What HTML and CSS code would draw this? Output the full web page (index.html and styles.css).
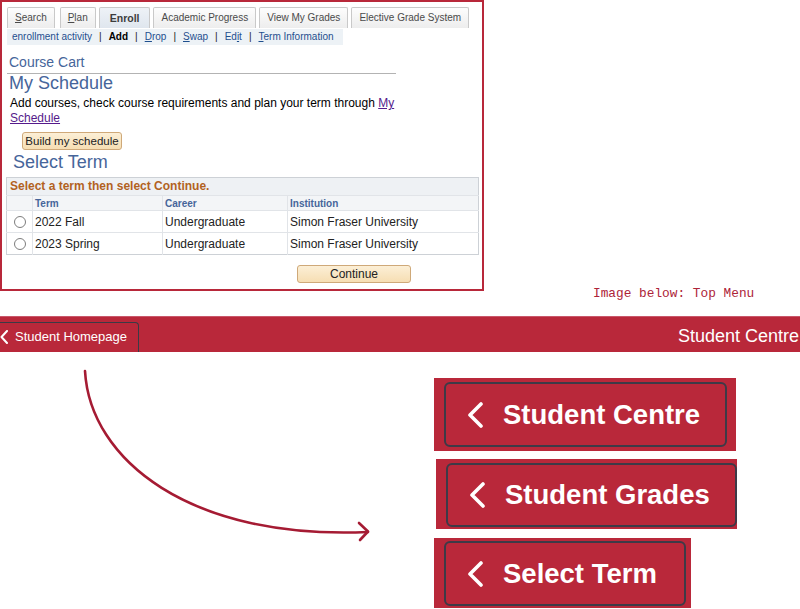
FILE: index.html
```html
<!DOCTYPE html>
<html lang="en">
<head>
<meta charset="utf-8">
<title>Enroll - Select Term</title>
<link rel="stylesheet" href="styles.css">
</head>
<body>
<div class="top">
  <div class="frame">
    <div class="tabs">
      <span class="tab tab-first"><u>S</u>earch</span>
      <span class="tab"><u>P</u>lan</span>
      <span class="tab tab-active">Enroll</span>
      <span class="tab">Academic Progress</span>
      <span class="tab">View My Grades</span>
      <span class="tab">Elective Grade System</span>
    </div>
    <div class="subnav">
      <span class="sublink">enrollment activity</span><span class="sep">|</span><b class="subcur">Add</b><span class="sep">|</span><span class="sublink"><u>D</u>rop</span><span class="sep">|</span><span class="sublink"><u>S</u>wap</span><span class="sep">|</span><span class="sublink">Ed<u>i</u>t</span><span class="sep">|</span><span class="sublink"><u>T</u>erm Information</span>
    </div>
    <div class="cart-title">Course Cart</div>
    <div class="rule"></div>
    <h2 class="h-blue h-sched">My Schedule</h2>
    <p class="intro">Add courses, check course requirements and plan your term through <a class="link">My Schedule</a></p>
    <button class="btn-ps btn-build">Build my schedule</button>
    <h2 class="h-blue h-term">Select Term</h2>
    <table class="terms">
      <tr class="t-title"><td colspan="4">Select a term then select Continue.</td></tr>
      <tr class="t-head"><th class="c1"></th><th class="c2">Term</th><th class="c3">Career</th><th class="c4">Institution</th></tr>
      <tr class="t-row"><td class="c1"><span class="radio"></span></td><td>2022 Fall</td><td>Undergraduate</td><td>Simon Fraser University</td></tr>
      <tr class="t-row"><td class="c1"><span class="radio"></span></td><td>2023 Spring</td><td>Undergraduate</td><td>Simon Fraser University</td></tr>
    </table>
    <button class="btn-ps btn-continue">Continue</button>
  </div>
  <div class="note">Image below: Top Menu</div>
</div>

<div class="menubar">
  <div class="home-btn">
    <svg class="home-chev" width="9" height="14" viewBox="0 0 9 14"><polyline points="7,1 1.5,7 7,13" fill="none" stroke="#fff" stroke-width="2" stroke-linecap="round" stroke-linejoin="round"/></svg>
    <span>Student Homepage</span>
  </div>
  <div class="bar-title">Student Centre</div>
</div>

<div class="canvas">
  <svg class="arrow" width="800" height="257" viewBox="0 352 800 257">
    <path d="M85,371 C90,460 190,540 368,532" fill="none" stroke="#a51b33" stroke-width="2.6" stroke-linecap="round"/>
    <polyline points="359,523 368,531.5 360,540" fill="none" stroke="#a51b33" stroke-width="2.6" stroke-linecap="round" stroke-linejoin="round"/>
  </svg>
  <div class="bigbtns">
    <div class="bigbtn bb1">
      <div class="bigbtn-inner">
        <svg class="chev" width="18" height="26" viewBox="0 0 18 26"><polyline points="15,2 4,13 15,24" fill="none" stroke="#fff" stroke-width="3.6" stroke-linecap="round" stroke-linejoin="round"/></svg>
        <span>Student Centre</span>
      </div>
    </div>
    <div class="bigbtn bb2">
      <div class="bigbtn-inner">
        <svg class="chev" width="18" height="26" viewBox="0 0 18 26"><polyline points="15,2 4,13 15,24" fill="none" stroke="#fff" stroke-width="3.6" stroke-linecap="round" stroke-linejoin="round"/></svg>
        <span>Student Grades</span>
      </div>
    </div>
    <div class="bigbtn bb3">
      <div class="bigbtn-inner">
        <svg class="chev" width="18" height="26" viewBox="0 0 18 26"><polyline points="15,2 4,13 15,24" fill="none" stroke="#fff" stroke-width="3.6" stroke-linecap="round" stroke-linejoin="round"/></svg>
        <span>Select Term</span>
      </div>
    </div>
  </div>
</div>
</body>
</html>
```

FILE: styles.css
```css
* { box-sizing: border-box; }
html, body { margin: 0; padding: 0; }
body {
  width: 800px;
  height: 609px;
  overflow: hidden;
  background: #fff;
  font-family: "Liberation Sans", Arial, Helvetica, sans-serif;
  color: #000;
}

/* ---------- top screenshot frame ---------- */
.top {
  display: flex;
  align-items: flex-end;
}
.frame {
  width: 484px;
  height: 291px;
  border: 2px solid #b8283a;
  padding: 5px 0 0 4px;
  flex: none;
}
.note {
  margin-left: 109px;
  margin-bottom: -10px;
  font-family: "Liberation Mono", "DejaVu Sans Mono", monospace;
  font-size: 12.8px;
  line-height: 14px;
  color: #ad2338;
  white-space: nowrap;
}

.tabs {
  display: flex;
  gap: 3px;
  margin-left: 1px;
  height: 21px;
}
.tab {
  height: 21px;
  border: 1px solid #c9c9c9;
  border-bottom: none;
  border-radius: 2px 2px 0 0;
  background: linear-gradient(#fdfdfd, #ededed);
  padding: 0 7px;
  font-size: 10px;
  line-height: 20px;
  color: #4a4a4a;
  white-space: nowrap;
}
.tab-first { margin-right: 2px; }
.tab-active {
  background: linear-gradient(#eef2f7, #dfe6ee);
  font-weight: bold;
  font-size: 10.5px;
  color: #3c3c3c;
  padding: 0 10px;
}

.subnav {
  margin: 1px 0 0 1px;
  width: 336px;
  height: 16px;
  background: #edf2f6;
  padding: 0 0 0 5px;
  font-size: 10px;
  line-height: 16px;
  white-space: nowrap;
  color: #111;
}
.sublink { color: #1f4f8e; }
.subcur { color: #000; }
.sep { margin: 0 7px; color: #222; }

.cart-title {
  margin: 9px 0 0 3px;
  font-size: 14px;
  line-height: 16px;
  color: #46659a;
}
.rule {
  margin: 3px 0 0 1px;
  width: 389px;
  height: 1px;
  background: #b3b3b3;
}
.h-blue {
  margin: 0;
  font-weight: normal;
  font-size: 18px;
  line-height: 18px;
  color: #46659a;
}
.h-sched { margin: 0 0 0 3px; }
.intro {
  margin: 4px 0 0 4px;
  width: 398px;
  font-size: 12px;
  line-height: 15px;
  color: #000;
}
.link {
  color: #551a8b;
  text-decoration: underline;
}
.btn-ps {
  display: block;
  height: 18px;
  padding: 0;
  border: 1px solid #cfa979;
  border-radius: 3px;
  background: linear-gradient(#fcefd6, #f6deb3);
  font-family: "Liberation Sans", Arial, sans-serif;
  font-size: 11.5px;
  line-height: 16px;
  color: #222;
}
.btn-build {
  margin: 6px 0 0 16px;
  width: 100px;
}
.h-term { margin: 3px 0 0 7px; }

.terms {
  margin-top: 6px;
  width: 473px;
  border-collapse: collapse;
  border: 1px solid #cdd1d6;
  background: #eef1f4;
}
.terms td, .terms th {
  padding: 0 0 0 2px;
  text-align: left;
  white-space: nowrap;
}
.t-title td {
  height: 17px;
  padding-left: 3px;
  font-size: 12px;
  font-weight: bold;
  color: #b2621f;
  line-height: 17px;
}
.t-head th {
  height: 15px;
  background: #f3f5f7;
  border-left: 1px solid #e1e4e8;
  border-top: 1px solid #e1e4e8;
  font-size: 10px;
  font-weight: bold;
  color: #46659a;
}
.t-head th.c1 { border-left: none; }
.c1 { width: 26px; }
.c2 { width: 130px; }
.c3 { width: 125px; }
.t-row td {
  height: 22px;
  background: #fff;
  border-top: 1px solid #e1e4e8;
  border-left: 1px solid #e1e4e8;
  font-size: 12px;
  color: #222;
}
.t-row td.c1 { border-left: none; text-align: center; padding: 0; }
.radio {
  display: inline-block;
  width: 12px;
  height: 12px;
  border: 1px solid #7d7d7d;
  border-radius: 50%;
  background: #fff;
  vertical-align: middle;
}
.btn-continue {
  margin: 10px 0 0 291px;
  width: 114px;
  font-size: 12px;
}

/* ---------- red menu bar ---------- */
.menubar {
  margin-top: 25px;
  height: 36px;
  background: #b9283a;
  border-top: 1px solid #c9576a;
  display: flex;
  align-items: flex-end;
  justify-content: space-between;
}
.home-btn {
  margin-left: -6px;
  width: 145px;
  height: 30px;
  border: 1.5px solid #3b3a45;
  border-bottom: none;
  border-radius: 4px 4px 0 0;
  display: flex;
  align-items: center;
  padding-left: 5px;
  padding-bottom: 2px;
  gap: 6px;
  color: #fff;
  font-size: 13px;
}
.home-chev { flex: none; }
.bar-title {
  align-self: center;
  color: #fff;
  font-size: 18px;
  line-height: 20px;
  padding-top: 3px;
  margin-right: 1px;
  white-space: nowrap;
}

/* ---------- lower canvas ---------- */
.canvas {
  position: relative;
  height: 257px;
}
.arrow {
  position: absolute;
  left: 0;
  top: 0;
}
.bigbtns {
  display: flex;
  flex-direction: column;
  align-items: flex-start;
  padding-top: 26px;
}
.bigbtn {
  background: #b9283a;
}
.bigbtn-inner {
  height: 100%;
  border: 2px solid #3d3a47;
  border-radius: 6px;
  display: flex;
  align-items: center;
  padding-left: 20px;
  gap: 19px;
  color: #fff;
  font-weight: bold;
  font-size: 27.5px;
  white-space: nowrap;
}
.chev { flex: none; }
.bb1 {
  margin-left: 434px;
  width: 302px;
  height: 73px;
  padding: 4px 9px 4px 10px;
}
.bb2 {
  margin-top: 8px;
  margin-left: 436px;
  width: 301px;
  height: 70px;
  padding: 4px 0 2px 10px;
}
.bb3 {
  margin-top: 9px;
  margin-left: 434px;
  width: 257px;
  height: 70px;
  padding: 3px 5px 2px 10px;
}
```
